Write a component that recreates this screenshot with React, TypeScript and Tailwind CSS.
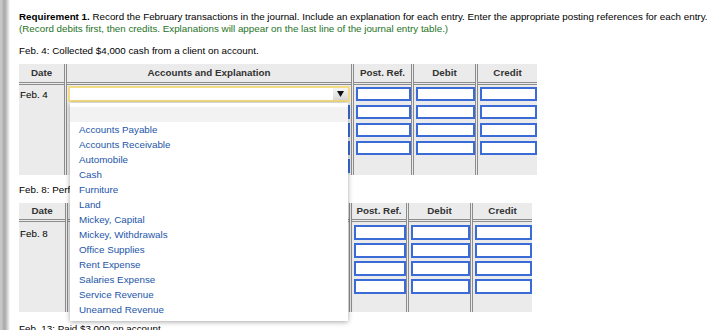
import React from 'react';

const accounts = [
  'Accounts Payable',
  'Accounts Receivable',
  'Automobile',
  'Cash',
  'Furniture',
  'Land',
  'Mickey, Capital',
  'Mickey, Withdrawals',
  'Office Supplies',
  'Rent Expense',
  'Salaries Expense',
  'Service Revenue',
  'Unearned Revenue',
];

const Box = ({ h }: { h: string }) => (
  <input
    type="text"
    readOnly
    className={`block w-full ${h} border-2 border-[#3a6bd6] bg-white outline-none`}
  />
);

const Header = ({ label, h }: { label: string; h: string }) => (
  <div
    className={`${h} flex items-center justify-center border-b-[3px] border-double border-[#8c8c8c] font-bold text-[#333]`}
  >
    {label}
  </div>
);

const colCls = 'flex flex-col bg-[#ebebeb] border-r-[3px] border-double border-[#8c8c8c]';

const Dropdown = () => (
  <div className="absolute left-[2px] top-[calc(100%+1px)] z-10 w-[278px] bg-white py-[4px] shadow-[0_1px_5px_rgba(0,0,0,0.35)]">
    <div className="h-[15px] bg-[#f2f2f2]" />
    {accounts.map((a) => (
      <div key={a} className="h-[15px] pl-[9px] leading-[15px] text-[#2456a8]">
        {a}
      </div>
    ))}
  </div>
);

const Select = () => (
  <div className="relative">
    <div className="flex h-[16px] items-stretch border-2 border-[#f3dc83] bg-white">
      <div className="flex-1" />
      <div className="flex w-[15px] items-center justify-center bg-[linear-gradient(#f6f6f6,#d9d9d9)]">
        <svg width="7" height="6" viewBox="0 0 7 6">
          <polygon points="0,0 7,0 3.5,6" fill="#111" />
        </svg>
      </div>
    </div>
    <Dropdown />
  </div>
);

// first journal table, with the account drop-down open
const TableOne = () => {
  const row = 'h-[18px] pt-[2px]';
  return (
    <div className="mt-[7px] flex w-[518px]">
      <div className={`${colCls} w-[48px]`}>
        <Header label="Date" h="h-[21px]" />
        <div className="h-[90px] pl-[1px] pt-[4px] leading-[12px]">Feb. 4</div>
      </div>
      <div className={`${colCls} w-[287px]`}>
        <Header label="Accounts and Explanation" h="h-[21px]" />
        <div className="px-[1px]">
          <div className="h-[18px] pt-[1px]">
            <Select />
          </div>
          {[0, 1, 2, 3].map((i) => (
            <div key={i} className={`${row} pl-[3px]`}>
              <Box h="h-[14px]" />
            </div>
          ))}
        </div>
      </div>
      {[
        ['Post. Ref.', 'w-[60px]'],
        ['Debit', 'w-[64px]'],
      ].map(([l, w]) => (
        <div key={l} className={`${colCls} ${w}`}>
          <Header label={l} h="h-[21px]" />
          <div className="h-[90px] pl-[2px]">
            {[0, 1, 2, 3].map((i) => (
              <div key={i} className={row}>
                <Box h="h-[14px]" />
              </div>
            ))}
          </div>
        </div>
      ))}
      <div className="flex w-[59px] flex-col bg-[#ebebeb]">
        <Header label="Credit" h="h-[21px]" />
        <div className="h-[90px] pl-[2px]">
          {[0, 1, 2, 3].map((i) => (
            <div key={i} className={row}>
              <Box h="h-[14px]" />
            </div>
          ))}
        </div>
      </div>
    </div>
  );
};

const TableTwo = () => {
  const row = 'h-[18px] pt-[3px]';
  return (
    <div className="mt-[7px] flex w-[513px]">
      <div className={`${colCls} w-[49px]`}>
        <Header label="Date" h="h-[19px]" />
        <div className="h-[90px] pl-[1px] pt-[6px] leading-[12px]">Feb. 8</div>
      </div>
      <div className={`${colCls} w-[284px]`}>
        <Header label="Accounts and Explanation" h="h-[19px]" />
        <div className="pl-[4px] pr-[1px]">
          {[0, 1, 2, 3, 4].map((i) => (
            <div key={i} className={row}>
              <Box h="h-[15px]" />
            </div>
          ))}
        </div>
      </div>
      {[
        ['Post. Ref.', 'w-[57px]'],
        ['Debit', 'w-[64px]'],
      ].map(([l, w]) => (
        <div key={l} className={`${colCls} ${w}`}>
          <Header label={l} h="h-[19px]" />
          <div className="h-[90px] pl-[2px]">
            {[0, 1, 2, 3].map((i) => (
              <div key={i} className={row}>
                <Box h="h-[15px]" />
              </div>
            ))}
          </div>
        </div>
      ))}
      <div className="flex w-[59px] flex-col bg-[#ebebeb]">
        <Header label="Credit" h="h-[19px]" />
        <div className="h-[90px] pl-[2px]">
          {[0, 1, 2, 3].map((i) => (
            <div key={i} className={row}>
              <Box h="h-[15px]" />
            </div>
          ))}
        </div>
      </div>
    </div>
  );
};

export default function App() {
  return (
    <div className="flex h-[330px] w-[725px] overflow-hidden bg-white font-['Liberation_Sans',Arial,sans-serif] text-[9.8px] leading-[12px] text-black">
      <div className="w-[10px] shrink-0 bg-[linear-gradient(to_right,#c9c9c9_0px,#c4c4c4_2px,#a8a8a8_4px,#b9b9b9_6px,#ffffff_10px)]" />
      <div className="flex-1 pl-[9px] pt-[11px]">
        <p>
          <span className="font-bold">Requirement 1.</span> Record the February transactions in the
          journal. Include an explanation for each entry. Enter the appropriate posting references for
          each entry.
        </p>
        <p className="text-[#267326]">
          (Record debits first, then credits. Explanations will appear on the last line of the journal
          entry table.)
        </p>
        <p className="mt-[10px]">Feb. 4: Collected $4,000 cash from a client on account.</p>
        <TableOne />
        <p className="mt-[9px]">Feb. 8: Performed services for a client on account.</p>
        <TableTwo />
        <p className="mt-[11px]">Feb. 13: Paid $3,000 on account.</p>
      </div>
    </div>
  );
}
